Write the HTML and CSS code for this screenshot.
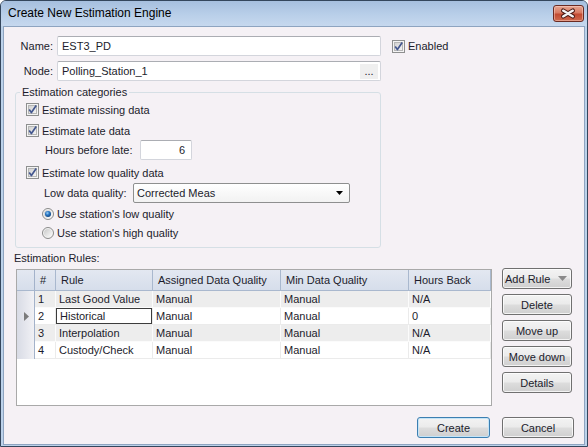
FILE: index.html
```html
<!DOCTYPE html>
<html>
<head>
<meta charset="utf-8">
<title>Create New Estimation Engine</title>
<link rel="stylesheet" href="styles.css">
</head>
<body>
<svg class="defs" width="0" height="0" aria-hidden="true">
  <defs>
    <linearGradient id="chkIn" x1="0" y1="0" x2="1" y2="1">
      <stop offset="0" stop-color="#cfcfcf"/>
      <stop offset="1" stop-color="#f6f6f6"/>
    </linearGradient>
    <linearGradient id="radIn" x1="0" y1="0" x2="1" y2="1">
      <stop offset="0" stop-color="#c9c9c9"/>
      <stop offset="1" stop-color="#fbfbfb"/>
    </linearGradient>
    <radialGradient id="dot" cx="0.4" cy="0.35" r="0.7">
      <stop offset="0" stop-color="#9ad2f5"/>
      <stop offset="0.45" stop-color="#2b78c6"/>
      <stop offset="1" stop-color="#0d3f7a"/>
    </radialGradient>
    <symbol id="chk" viewBox="0 0 13 13">
      <rect x="0.5" y="0.5" width="12" height="12" fill="#f4f4f4" stroke="#8e8f8f"/>
      <rect x="2.5" y="2.5" width="8" height="8" fill="url(#chkIn)" stroke="#b6b6b6"/>
      <path d="M3.2 6.6 L5.4 9.6 L10.2 2.6" fill="none" stroke="#44578f" stroke-width="1.7" stroke-linejoin="round"/>
    </symbol>
    <symbol id="radOn" viewBox="0 0 12 12">
      <circle cx="6" cy="6" r="5.5" fill="#f3f3f3" stroke="#8a8a8a"/>
      <circle cx="6" cy="6" r="4" fill="url(#radIn)"/>
      <circle cx="6" cy="6" r="3" fill="url(#dot)"/>
    </symbol>
    <symbol id="radOff" viewBox="0 0 12 12">
      <circle cx="6" cy="6" r="5.5" fill="#f3f3f3" stroke="#8a8a8a"/>
      <circle cx="6" cy="6" r="4" fill="url(#radIn)"/>
    </symbol>
  </defs>
</svg>

<div class="window">
  <div class="titlebar">
    <span class="title">Create New Estimation Engine</span>
    <span class="close-btn">
      <svg width="31" height="17" viewBox="0 0 31 17">
        <path d="M10.5 5.5 L20.5 11.5 M20.5 5.5 L10.5 11.5" stroke="#4b1a14" stroke-width="4.4" stroke-linecap="round"/>
        <path d="M10.5 5.5 L20.5 11.5 M20.5 5.5 L10.5 11.5" stroke="#f4f4f4" stroke-width="2.4" stroke-linecap="round"/>
      </svg>
    </span>
  </div>

  <div class="client">
    <div class="field-row row-name">
      <span class="field-label">Name:</span>
      <div class="textbox wide">EST3_PD</div>
      <span class="check-item enabled"><svg class="chk"><use href="#chk"/></svg>Enabled</span>
    </div>

    <div class="field-row row-node">
      <span class="field-label">Node:</span>
      <div class="textbox wide node-box">
        <span class="tb-text">Polling_Station_1</span>
        <span class="dots">...</span>
      </div>
    </div>

    <div class="group">
      <div class="legend">Estimation categories</div>
      <div class="check-row r1"><svg class="chk"><use href="#chk"/></svg>Estimate missing data</div>
      <div class="check-row r2"><svg class="chk"><use href="#chk"/></svg>Estimate late data</div>
      <div class="sub-row hours-row">
        <span class="hours-label">Hours before late:</span>
        <div class="textbox num">6</div>
      </div>
      <div class="check-row r3"><svg class="chk"><use href="#chk"/></svg>Estimate low quality data</div>
      <div class="sub-row quality-row">
        <span class="quality-label">Low data quality:</span>
        <div class="combo">
          <span>Corrected Meas</span>
          <svg width="7" height="4" viewBox="0 0 7 4"><path d="M0 0 H7 L3.5 4 Z" fill="#000"/></svg>
        </div>
      </div>
      <div class="radio-row rr1"><svg class="rad"><use href="#radOn"/></svg>Use station's low quality</div>
      <div class="radio-row rr2"><svg class="rad"><use href="#radOff"/></svg>Use station's high quality</div>
    </div>

    <div class="rules-label">Estimation Rules:</div>

    <div class="rules">
      <div class="grid">
        <div class="grow head">
          <div class="c rh"></div>
          <div class="c">#</div>
          <div class="c">Rule</div>
          <div class="c">Assigned Data Quality</div>
          <div class="c">Min Data Quality</div>
          <div class="c">Hours Back</div>
        </div>
        <div class="grow data alt">
          <div class="c rh"></div>
          <div class="c">1</div>
          <div class="c">Last Good Value</div>
          <div class="c">Manual</div>
          <div class="c">Manual</div>
          <div class="c">N/A</div>
        </div>
        <div class="grow data">
          <div class="c rh"><svg width="5" height="9" viewBox="0 0 5 9"><path d="M0 0 L5 4.5 L0 9 Z" fill="#7b7b7b"/></svg></div>
          <div class="c">2</div>
          <div class="c focus">Historical</div>
          <div class="c">Manual</div>
          <div class="c">Manual</div>
          <div class="c">0</div>
        </div>
        <div class="grow data alt">
          <div class="c rh"></div>
          <div class="c">3</div>
          <div class="c">Interpolation</div>
          <div class="c">Manual</div>
          <div class="c">Manual</div>
          <div class="c">N/A</div>
        </div>
        <div class="grow data">
          <div class="c rh"></div>
          <div class="c">4</div>
          <div class="c">Custody/Check</div>
          <div class="c">Manual</div>
          <div class="c">Manual</div>
          <div class="c">N/A</div>
        </div>
      </div>

      <div class="side-buttons">
        <div class="btn split">
          <span>Add Rule</span>
          <svg width="9" height="5" viewBox="0 0 9 5"><path d="M0 0 H9 L4.5 5 Z" fill="#8a8a8a"/></svg>
        </div>
        <div class="btn">Delete</div>
        <div class="btn">Move up</div>
        <div class="btn">Move down</div>
        <div class="btn">Details</div>
      </div>
    </div>

    <div class="footer">
      <div class="btn btn-default create">Create</div>
      <div class="btn cancel">Cancel</div>
    </div>
  </div>
</div>
</body>
</html>
```
FILE: styles.css
```css
* {
  box-sizing: border-box;
  margin: 0;
  padding: 0;
}

html, body {
  width: 588px;
  height: 447px;
  overflow: hidden;
  background: #ffffff;
}

body {
  font-family: "Liberation Sans", Arial, sans-serif;
  font-size: 11px;
  color: #1c1c2c;
}

.defs {
  display: block;
  width: 0;
  height: 0;
  overflow: hidden;
}

.window {
  width: 588px;
  height: 447px;
  display: flex;
  flex-direction: column;
  background: #bcd2ea;
  border: 1px solid #34465c;
  border-radius: 6px 6px 0 0;
  overflow: hidden;
}

.titlebar {
  height: 25px;
  flex: none;
  display: flex;
  justify-content: space-between;
  align-items: flex-start;
  padding: 0 3px 0 7px;
  background: linear-gradient(#a6bfde, #b9cfe9 55%, #c6d8ee);
}

.title {
  font-size: 12px;
  color: #000;
  line-height: 25px;
}

.close-btn {
  margin-top: 4px;
  width: 31px;
  height: 17px;
  border: 1px solid #6a2a22;
  border-radius: 3px;
  background: linear-gradient(#e6a591, #d87a62 45%, #c24a31 55%, #cf6a4e);
  box-shadow: inset 0 0 0 1px rgba(255, 220, 210, 0.45);
  display: flex;
}

.close-btn svg {
  margin: -1px 0 0 -1px;
}

.client {
  flex: 1;
  margin: 0 2px 1px 2px;
  border: 1px solid #8ea4c0;
  background: #f5f1f5;
}

/* top fields */
.field-row {
  display: flex;
  align-items: center;
  height: 20px;
}

.row-name {
  margin-top: 9px;
}

.row-node {
  margin-top: 5px;
}

.field-label {
  width: 49px;
  text-align: right;
  margin-right: 4px;
}

.textbox {
  height: 20px;
  background: #fff;
  border: 1px solid #d3d5dc;
  border-top-color: #abadb3;
  border-radius: 2px;
  display: flex;
  align-items: center;
  padding-left: 4px;
}

.textbox.wide {
  width: 324px;
}

.node-box {
  justify-content: space-between;
  padding-right: 2px;
}

.dots {
  width: 18px;
  height: 15px;
  background: #efefef;
  text-align: center;
  line-height: 14px;
  letter-spacing: 0;
}

.check-item {
  display: flex;
  align-items: center;
}

.enabled {
  margin-left: 11px;
}

.chk {
  width: 13px;
  height: 13px;
  margin-right: 3px;
  flex: none;
}

.rad {
  width: 12px;
  height: 12px;
  margin-right: 3px;
  flex: none;
}

/* group box */
.group {
  margin: 11px 0 0 11px;
  width: 366px;
  height: 156px;
  border: 1px solid #d5dfe5;
  border-radius: 3px;
}

.legend {
  width: max-content;
  margin: -7px 0 0 4px;
  padding: 0 2px;
  line-height: 13px;
  background: #f5f1f5;
}

.check-row {
  display: flex;
  align-items: center;
  height: 17px;
  padding-left: 10px;
}

.check-row.r1 { margin-top: 2px; }
.check-row.r2 { margin-top: 4px; }
.check-row.r3 { margin-top: 4px; }

.sub-row {
  display: flex;
  align-items: center;
  height: 20px;
}

.hours-row {
  margin-top: 1px;
  padding-left: 29px;
}

.hours-label {
  width: 95px;
}

.textbox.num {
  width: 52px;
  justify-content: flex-end;
  padding-right: 6px;
}

.quality-row {
  margin-top: 2px;
  padding-left: 28px;
}

.quality-label {
  width: 89px;
}

.combo {
  width: 217px;
  height: 20px;
  border: 1px solid #8e8f8f;
  border-radius: 2px;
  background: linear-gradient(#ffffff, #f2f2f2);
  display: flex;
  align-items: center;
  justify-content: space-between;
  padding: 0 6px 0 3px;
}

.radio-row {
  display: flex;
  align-items: center;
  height: 17px;
  padding-left: 26px;
  margin-top: 2px;
}

/* rules */
.rules-label {
  margin: 4px 0 0 10px;
  line-height: 13px;
}

.rules {
  display: flex;
  align-items: flex-start;
  margin-top: 3px;
}

.grid {
  margin: 1px 0 0 12px;
  width: 476px;
  height: 137px;
  border: 1px solid #a9a9a9;
  background: #fff;
}

.grow {
  display: grid;
  grid-template-columns: 18px 21px 97px 128px 128px 82px;
}

.grow .c {
  display: flex;
  align-items: center;
  white-space: nowrap;
  overflow: hidden;
}

.head {
  height: 21px;
}

.head .c {
  padding-left: 5px;
  background: linear-gradient(#e3e8f1, #d6deeb);
  border-right: 1px solid #a9b8ce;
  border-bottom: 1px solid #a9b8ce;
}

.data {
  height: 17px;
}

.data .c {
  padding-left: 3px;
  background: #fff;
  border-right: 1px solid #ebebeb;
  border-bottom: 1px solid #ebebeb;
}

.data.alt .c {
  background: #ededed;
  border-color: #fbfbfb;
}

.grow .c.rh {
  padding-left: 7px;
  background: linear-gradient(90deg, #d8dbe5, #f1f1f5);
  border-right: 1px solid #a3b2ca;
  border-bottom: none;
}

.head .c.rh {
  background: linear-gradient(#e3e8f1, #d6deeb);
  border-bottom: 1px solid #a9b8ce;
}

.data .c.focus {
  box-shadow: inset 0 0 0 1px #3c3c3c;
  padding-left: 4px;
}

.side-buttons {
  margin-left: 10px;
  display: flex;
  flex-direction: column;
  gap: 5px;
}

.btn {
  width: 70px;
  height: 21px;
  border: 1px solid #707070;
  border-radius: 3px;
  background: linear-gradient(#f3f3f3 0%, #ebebeb 48%, #dddddd 52%, #cfcfcf 100%);
  box-shadow: inset 0 0 0 1px rgba(255, 255, 255, 0.75);
  display: flex;
  align-items: center;
  justify-content: center;
}

.btn.split {
  justify-content: space-between;
  padding: 0 4px 0 2px;
}

.footer {
  display: flex;
  justify-content: flex-end;
  gap: 12px;
  margin-top: 11px;
  padding-right: 10px;
}

.btn.create {
  width: 73px;
}

.btn.cancel {
  width: 72px;
}

.btn-default {
  border-color: #3c7fb1;
  box-shadow: inset 0 0 0 1px #c4e4f7;
}
```
